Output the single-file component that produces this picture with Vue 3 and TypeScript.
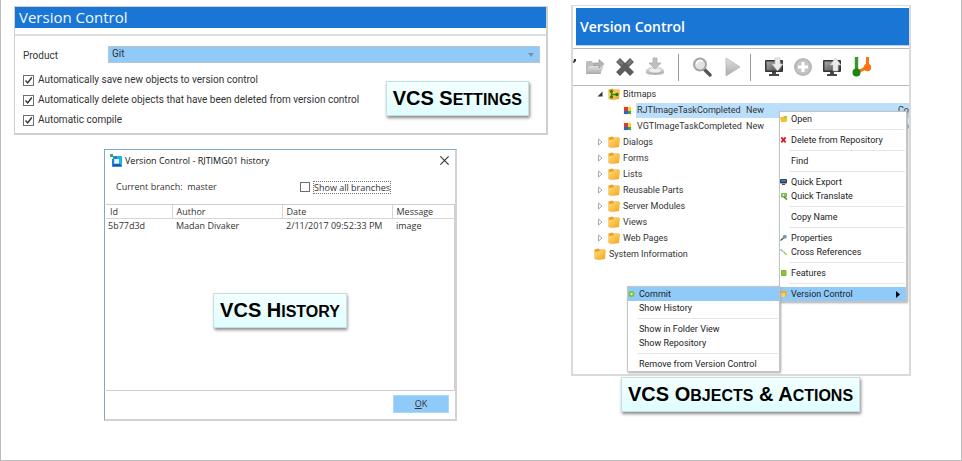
<script setup lang="ts">
import { ref } from 'vue'

interface Option { id: string; label: string; on: boolean }
interface TreeNode { label: string; level: 0 | 1 | 2; kind: 'folder' | 'bitmaps' | 'image'; open?: boolean; status?: string; next?: string; selected?: boolean }
interface MenuItem { label: string; icon?: string; children?: MenuItem[][]; active?: boolean }

const product = ref('Git')
const options = ref<Option[]>([
  { id: 'save', label: 'Automatically save new objects to version control', on: true },
  { id: 'delete', label: 'Automatically delete objects that have been deleted from version control', on: true },
  { id: 'compile', label: 'Automatic compile', on: true },
])
const showAll = ref(false)

const history = [
  { id: '5b77d3d', author: 'Madan Divaker', date: '2/11/2017 09:52:33 PM', message: 'image' },
]

const tree: TreeNode[] = [
  { label: 'Bitmaps', level: 1, kind: 'bitmaps', open: true },
  { label: 'RJTImageTaskCompleted', level: 2, kind: 'image', status: 'New', next: 'Co', selected: true },
  { label: 'VGTImageTaskCompleted', level: 2, kind: 'image', status: 'New', next: 'Co' },
  { label: 'Dialogs', level: 1, kind: 'folder' },
  { label: 'Forms', level: 1, kind: 'folder' },
  { label: 'Lists', level: 1, kind: 'folder' },
  { label: 'Reusable Parts', level: 1, kind: 'folder' },
  { label: 'Server Modules', level: 1, kind: 'folder' },
  { label: 'Views', level: 1, kind: 'folder' },
  { label: 'Web Pages', level: 1, kind: 'folder' },
  { label: 'System Information', level: 0, kind: 'folder' },
]

const menu: MenuItem[][] = [
  [{ label: 'Open', icon: 'open' }],
  [{ label: 'Delete from Repository', icon: 'delete' }],
  [{ label: 'Find' }],
  [{ label: 'Quick Export', icon: 'export' }, { label: 'Quick Translate', icon: 'translate' }],
  [{ label: 'Copy Name' }],
  [{ label: 'Properties', icon: 'props' }, { label: 'Cross References', icon: 'cross' }],
  [{ label: 'Features', icon: 'features' }],
  [{
    label: 'Version Control', icon: 'vcs', active: true,
    children: [
      [{ label: 'Commit', icon: 'commit', active: true }, { label: 'Show History' }],
      [{ label: 'Show in Folder View' }, { label: 'Show Repository' }],
      [{ label: 'Remove from Version Control' }],
    ],
  }],
]
</script>

<template>
  <svg class="defs" aria-hidden="true">
    <defs>
      <linearGradient id="gold" x1="0" y1="0" x2="1" y2="1">
        <stop offset="0" stop-color="#ffe07a" /><stop offset="1" stop-color="#f5a21c" />
      </linearGradient>
      <linearGradient id="grey" x1="0" y1="0" x2="0" y2="1">
        <stop offset="0" stop-color="#e2e2e2" /><stop offset="1" stop-color="#a9a9a9" />
      </linearGradient>
      <linearGradient id="screen" x1="0" y1="0" x2="1" y2="1">
        <stop offset="0" stop-color="#a8a8a8" /><stop offset="1" stop-color="#4c4c4c" />
      </linearGradient>
      <g id="menu-open"><path d="M0 2h3l1-1h3v5l-1 1H1z" fill="#f4c22b" /><path d="M4 1h3v2H4z" fill="#a7c944" /></g>
      <g id="menu-delete"><path d="M1.3 1.3l4.4 5M5.700 1.300l-4.400 5" stroke="#e01b1b" stroke-width="1.800" /></g>
      <g id="menu-export"><rect y="1" width="7" height="4.500" rx="1" fill="#26405e" /><path d="M1 2h5v1.500H1z" fill="#4f83b5" /><path d="M2 6h3v1H2z" fill="#8d3038" /></g>
      <g id="menu-translate"><rect x="1" y="1" width="6" height="4.500" rx="1" fill="#7ab648" /><circle cx="3.500" cy="3" r="1" fill="#e5f4d5" /><path d="M4 5l3 2.500" stroke="#4b8a35" stroke-width="1.500" /></g>
      <g id="menu-props"><circle cx="4.800" cy="2.800" r="2" fill="#6d9dbd" /><path d="M3.500 4L.5 6.500" stroke="#47545e" stroke-width="1.400" /></g>
      <g id="menu-cross"><path d="M.5 1.500l2.500 2" stroke="#62b8d8" stroke-width="1.500" /><path d="M3.500 3.500L6.500 7" stroke="#a8cf62" stroke-width="1.600" /></g>
      <g id="menu-features"><rect x="1" y="1" width="5.500" height="6" rx="1" fill="#79b62c" /><path d="M2 3h3.500M2 5h3.500" stroke="#b2db76" stroke-width=".7" /></g>
      <g id="menu-vcs"><path d="M1 2.500L2 1h4.500v5.500H1z" fill="#f3a931" /><path d="M1 3h4v4H1z" fill="#ffce67" /></g>
      <g id="menu-commit"><circle cx="3.500" cy="4" r="3" fill="#78c13f" /><circle cx="3.500" cy="4" r="1.200" fill="#e2f5d0" /></g>
    </defs>
  </svg>

  <main class="slide">
    <div class="column">
      <section class="settings">
        <h1 class="settings-title">Version Control</h1>
        <form class="settings-form" @submit.prevent>
          <div class="product">
            <label for="product">Product</label>
            <div class="picker">
              <select id="product" v-model="product"><option>Git</option></select>
              <svg class="caret" viewBox="0 0 6 4" aria-hidden="true"><path d="M0 0h6L3 4z" fill="#7890a4" /></svg>
            </div>
          </div>
          <div v-for="o in options" :key="o.id" class="check">
            <input :id="o.id" v-model="o.on" type="checkbox">
            <label :for="o.id">{{ o.label }}</label>
          </div>
        </form>
        <p class="callout on-settings">VCS S<span>ettings</span></p>
      </section>

      <section class="dialog">
        <header class="dialog-bar">
          <svg class="app-icon" viewBox="0 0 12 13" aria-hidden="true">
            <path d="M3 2h9v10.500H2V5h2.500v5H9V5H3z" fill="#1b7fdc" />
            <path d="M7 2h5v10L9 9.500V5H7z" fill="#19b5e8" />
            <path d="M2 12.500L5 9.500h4l3 3z" fill="#1553b5" />
            <path d="M4.500 5H9v4.500H4.500z" fill="#eaf6ff" />
            <path d="M0 0h3v3H0z" fill="#2fb457" /><path d="M3.500 3h1.500v1.500H3.500z" fill="#2fb457" />
          </svg>
          <h2>Version Control - RJTIMG01 history</h2>
          <button class="close" type="button" aria-label="Close">
            <svg viewBox="0 0 8 8" aria-hidden="true"><path d="M.3.3l7.400 7.400M7.700.3L.3 7.700" stroke="#333" fill="none" /></svg>
          </button>
        </header>
        <div class="branch">
          <span>Current branch:&nbsp; master</span>
          <div class="check">
            <input id="all" v-model="showAll" type="checkbox">
            <label for="all" class="focused">Show all branches</label>
          </div>
        </div>
        <div class="table-area">
          <table>
            <colgroup><col class="c-id"><col class="c-author"><col class="c-date"><col></colgroup>
            <thead><tr><th>Id</th><th>Author</th><th>Date</th><th>Message</th></tr></thead>
            <tbody>
              <tr v-for="h in history" :key="h.id">
                <td>{{ h.id }}</td><td>{{ h.author }}</td><td>{{ h.date }}</td><td>{{ h.message }}</td>
              </tr>
            </tbody>
          </table>
        </div>
        <footer><button class="ok" type="button"><u>O</u>K</button></footer>
        <p class="callout on-dialog">VCS H<span>istory</span></p>
      </section>
    </div>

    <div class="column">
      <section class="objects">
        <h2 class="objects-title">Version Control</h2>
        <div class="toolbar">
          <svg class="grip" viewBox="0 0 3 4" aria-hidden="true"><path d="M1 0h2v2L1 4H0z" fill="#333" /></svg>
          <div class="tools">
            <button type="button" aria-label="Open">
              <svg viewBox="0 0 20 20"><path d="M1 5l1-1h5l1 2h4v3h4v8H1z" fill="#bdbdbd" /><path d="M4 9h15l-4 8H1z" fill="url(#grey)" /><path d="M9 6h5V2.500L19 7l-5 4V8.500H9z" fill="#b5b5b5" stroke="#989898" stroke-width=".7" /></svg>
            </button>
            <button type="button" aria-label="Delete">
              <svg viewBox="0 0 20 20"><path d="M3 3l14 14M17 3L3 17" stroke="#5d5d5d" stroke-width="5.500" /><path d="M3.500 3.500l4 4M16.500 3.500l-4 4" stroke="#777" stroke-width="3" /></svg>
            </button>
            <button type="button" aria-label="Import">
              <svg viewBox="0 0 20 20"><path d="M1 13l4-3h10l4 3v3c-2 2.500-16 2.500-18 0z" fill="url(#grey)" /><ellipse cx="10" cy="13.500" rx="6" ry="2" fill="#eee" /><path d="M8 1h4v5h4l-6 6-6-6h4z" fill="#bfbfbf" stroke="#a0a0a0" stroke-width=".6" /></svg>
            </button>
          </div>
          <i class="rule" />
          <div class="tools">
            <button type="button" aria-label="Search">
              <svg viewBox="0 0 20 20"><path d="M12.500 12.500l5.500 5.500" stroke="#555" stroke-width="3.400" stroke-linecap="round" /><circle cx="8" cy="7.500" r="6" fill="#e2e2e2" stroke="#a4a4a4" stroke-width="2" /><path d="M4.500 7a4 4 0 0 1 6-3" stroke="#fff" stroke-width="1.500" fill="none" /></svg>
            </button>
            <button type="button" aria-label="Run">
              <svg viewBox="0 0 20 20"><path d="M4 1l14 9L4 19z" fill="url(#grey)" stroke="#b5b5b5" stroke-width=".8" /></svg>
            </button>
          </div>
          <i class="rule after-run" />
          <div class="tools tight">
            <button type="button" aria-label="Check out">
              <svg viewBox="0 0 20 20"><rect x="1" y="3" width="18" height="12" rx="1" fill="#333" /><path d="M2.500 4.500h15v9h-15z" fill="url(#screen)" /><path d="M8 15h4v2h3v2H5v-2h3z" fill="#484848" /><path d="M11 1h5v6h3l-5.500 7L8 7h3z" fill="#ececec" stroke="#bbb" stroke-width=".6" /></svg>
            </button>
            <button type="button" aria-label="Add">
              <svg viewBox="0 0 20 20"><circle cx="10" cy="10" r="9" fill="#b7b7b7" /><circle cx="10" cy="10" r="7" fill="#c6c6c6" /><path d="M10 5v10M5 10h10" stroke="#fff" stroke-width="3" /></svg>
            </button>
            <button type="button" aria-label="Check in">
              <svg viewBox="0 0 20 20"><rect x="1" y="3" width="18" height="12" rx="1" fill="#333" /><path d="M2.500 4.500h15v9h-15z" fill="url(#screen)" /><path d="M8 15h4v2h3v2H5v-2h3z" fill="#484848" /><path d="M11 14h5V8h3L13.500 1 8 8h3z" fill="#ececec" stroke="#bbb" stroke-width=".6" /></svg>
            </button>
            <button type="button" aria-label="Branches">
              <svg viewBox="0 0 20 20"><path d="M16.500 0v10L5 16" stroke="#ff7410" stroke-width="3" fill="none" /><circle cx="16.500" cy="10.500" r="3.800" fill="#ff7410" /><path d="M5.500 0v15" stroke="#3a962b" stroke-width="3.400" /><circle cx="5.500" cy="15.500" r="4" fill="#1e830f" /></svg>
            </button>
          </div>
        </div>

        <ul class="tree">
          <li v-for="n in tree" :key="n.label" :class="['node', 'level-' + n.level]">
            <svg v-if="n.level === 1" class="arrow" viewBox="0 0 6 8" aria-hidden="true">
              <path v-if="n.open" d="M5.500 1.500v5h-5z" fill="#333" />
              <path v-else d="M1.500 1L5 4 1.500 7z" fill="#fff" stroke="#aaa" />
            </svg>
            <svg v-if="n.kind === 'image'" class="pic" viewBox="0 0 9 10" aria-hidden="true">
              <path d="M0 0h8v10H0z" fill="#f3f3f3" /><path d="M1 2h4v4H1z" fill="#e23a2c" /><path d="M5 2h3v4H5z" fill="#f5cf2e" /><path d="M1 6h4v3H1z" fill="#2c64c8" /><path d="M5 6h3v3H5z" fill="#3da53c" />
            </svg>
            <svg v-else class="folder" viewBox="0 0 12 12" aria-hidden="true">
              <path d="M.5 1.500l4-1 1 1h5.500v9.500l-6 .8L.5 11z" fill="#f0a020" />
              <path d="M1 4l4-.5 1-1.200L12 2l-1 8.500L1 11.500z" fill="url(#gold)" />
              <g v-if="n.kind === 'bitmaps'"><path d="M3.500 3v6M3.500 6.500H9" stroke="#2a8a1c" stroke-width="1.300" /><circle cx="3.500" cy="3.500" r="1.600" fill="#1d8112" /><circle cx="3.500" cy="9" r="1.600" fill="#1d8112" /><circle cx="9" cy="6.500" r="1.700" fill="#1d8112" /></g>
            </svg>
            <div class="cells" :class="{ selected: n.selected }">
              <span>{{ n.label }}</span><span v-if="n.status">{{ n.status }}</span><span v-if="n.next">{{ n.next }}</span>
            </div>
          </li>
        </ul>

        <div class="menu context">
          <div v-for="(group, g) in menu" :key="g" class="group">
            <div v-for="item in group" :key="item.label" class="entry">
              <button type="button" :class="{ active: item.active }">
                <svg class="glyph" viewBox="0 0 8 8" aria-hidden="true"><use v-if="item.icon" :href="'#menu-' + item.icon" /></svg>
                <span>{{ item.label }}</span>
                <svg v-if="item.children" class="more" viewBox="0 0 4 7" aria-hidden="true"><path d="M0 0l4 3.500L0 7z" /></svg>
              </button>
              <div v-if="item.children" class="menu submenu">
                <div v-for="(sub, s) in item.children" :key="s" class="group">
                  <button v-for="c in sub" :key="c.label" type="button" :class="{ active: c.active }">
                    <svg class="glyph" viewBox="0 0 8 8" aria-hidden="true"><use v-if="c.icon" :href="'#menu-' + c.icon" /></svg>
                    <span>{{ c.label }}</span>
                  </button>
                </div>
              </div>
            </div>
          </div>
        </div>
      </section>
      <p class="callout on-objects">VCS O<span>bjects</span> &amp; A<span>ctions</span></p>
    </div>
  </main>
</template>

<style>
body { margin: 0; background: #fff; }
</style>

<style scoped>
.defs { position: absolute; width: 0; height: 0; }
.slide {
  box-sizing: border-box;
  min-height: 100vh;
  display: grid;
  grid-template-columns: 534fr 340fr;
  align-items: start;
  gap: 23px;
  padding: 5px 50px 0 13px;
  border: solid #bdbdbd;
  border-width: 0 1px 1px;
  font: 9px/14px "Open Sans", sans-serif;
  color: #333;
  white-space: nowrap;
}
h1, h2, p, ul { margin: 0; padding: 0; }
button { font: inherit; color: inherit; padding: 0; border: 0; background: none; }
svg { display: block; flex: none; }

.settings { position: relative; margin-top: 1px; border: 1px solid #cfcfcf; border-width: 1px 2px 2px 1px; font-family: Roboto, sans-serif; font-size: 10px; }
.settings-title { background: #1a76d4; color: #f2f8ff; font: 400 15px/21px "Open Sans", sans-serif; padding-left: 4px; }
.settings-form { margin-top: 6px; border-top: 2px solid #dedede; padding: 9px 6px 3px 8px; }
.product { display: grid; grid-template-columns: 85px 1fr; align-items: center; margin-bottom: 7px; }
.product label { padding-top: 4px; }
.picker { position: relative; }
select {
  appearance: none; display: block; width: 100%; height: 17px; padding: 0 3px;
  font: inherit; color: inherit; background: #90caf9; border: 1px solid #b9c6cf; border-radius: 0;
}
.caret { position: absolute; right: 6px; top: 7px; width: 6px; height: 4px; }
.check { display: flex; align-items: center; gap: 4px; }
.settings .check { height: 20px; }
input {
  appearance: none; box-sizing: border-box; flex: none; width: 11px; height: 11px; margin: 0;
  border: 1px solid #6e6e6e; background: #fff;
}
input:checked { background: #fff url("data:image/svg+xml,%3Csvg xmlns='http://www.w3.org/2000/svg' viewBox='0 0 9 9'%3E%3Cpath d='M1.500 4.500l2.200 2.500L7.800 1.500' fill='none' stroke='%23333' stroke-width='1.400'/%3E%3C/svg%3E"); }

.callout {
  width: max-content; padding: 0 6px; border: 1px solid #c3e1e3;
  background: linear-gradient(#f4ffff, #e0fdfe); box-shadow: 1px 2px 3px #888;
  font: bold 20px/33px "Liberation Sans", sans-serif; color: #000;
}
.callout span { font-size: 16px; line-height: 16px; text-transform: uppercase; }
.on-settings { position: absolute; right: 17px; bottom: 17px; }
.on-dialog { position: absolute; left: 50%; top: 143px; transform: translateX(-50%); }
.on-objects { margin: 1px 0 0 50px; }

.dialog { position: relative; margin: 14px 91px 0 90px; border: solid #d2d2d2; border-width: 1px 2px 2px 1px; border-top-color: #7fa9c8; border-left-color: #7fa9c8; }
.dialog-bar { display: flex; align-items: center; gap: 3px; height: 21px; padding: 0 6px 0 5px; }
.dialog-bar h2 { flex: 1; font-size: 9px; font-weight: 400; color: #111; }
.app-icon { width: 12px; height: 13px; }
.close svg { width: 9px; height: 9px; }
.branch { display: flex; align-items: center; justify-content: space-between; padding: 9px 65px 10px 11px; }
.branch input { width: 10px; height: 10px; }
.focused { outline: 1px dotted #777; line-height: 11px; }
.table-area { min-height: 185px; margin-left: 1px; border: solid #cfcfcf; border-width: 1px 1px 1px 0; }
table { width: 100%; table-layout: fixed; border-collapse: collapse; }
th { font-weight: 400; text-align: left; height: 13px; line-height: 13px; padding: 0 0 0 4px; border: solid #d6d6d6; border-width: 0 1px 1px 0; }
th:last-child { border-right: 0; }
td { height: 13px; line-height: 13px; padding: 0 0 0 4px; }
td:first-child { padding-left: 2px; }
.c-id { width: 66px; }
.c-author { width: 110px; }
.c-date { width: 110px; }
footer { display: flex; justify-content: flex-end; padding: 4px 6px 6px; }
.ok { width: 56px; height: 18px; background: #90caf9; border: 1px solid #a9d8fb; }

.objects { position: relative; border: solid #dadada; border-width: 1px 2px 2px; padding-bottom: 112px; font-family: Roboto, sans-serif; }
.objects-title { margin: 2px 0 2px 3px; padding-left: 4px; background: #1a76d4; border-bottom: 1px solid #b7cde2; color: #fff; font: 600 14px/37px "Open Sans", sans-serif; }
.toolbar { display: flex; align-items: center; height: 36px; border: solid #b9b9b9; border-width: 1px 0; }
.grip { width: 3px; height: 4px; margin: 0 9px 12px 0; }
.tools { display: flex; gap: 10px; }
.tools.tight { gap: 9px; }
.tools button, .tools svg { width: 20px; height: 20px; }
.rule { width: 1px; height: 27px; margin: 0 13px; background: #9a9a9a; }
.rule.after-run { margin-left: 8px; }

.tree { list-style: none; }
.node { display: flex; align-items: center; height: 16px; overflow: hidden; }
.level-0 { padding-left: 21px; }
.level-1 { padding-left: 24px; }
.level-2 { padding-left: 50px; }
.arrow { width: 6px; height: 8px; margin-right: 5px; }
.folder { width: 12px; height: 12px; }
.pic { width: 9px; height: 10px; margin-right: 4px; }
.cells { flex: 1; display: grid; grid-template-columns: 109px 1fr 11px; padding-left: 3px; line-height: 15px; }
.level-2 .cells { padding-left: 1px; }
.selected { background: #bbdefb; }

.menu { position: absolute; background: #fff; border: 1px solid #c4c4c4; box-shadow: 1px 1px 2px #aaa; color: #222; }
.context { top: 105px; right: 2px; width: 126px; }
.submenu { right: 100%; top: -1px; width: 151px; }
.entry { position: relative; }
.group + .group::before { content: ""; display: block; height: 1px; margin: 3px 1px 3px 9px; background: #e6e6e6; }
.menu button { display: flex; align-items: center; width: 100%; height: 14px; gap: 3px; text-align: left; }
.menu .active { background: #90caf9; }
.glyph { width: 8px; height: 8px; }
.more { width: 4px; height: 7px; margin: 0 6px 0 auto; }
</style>
